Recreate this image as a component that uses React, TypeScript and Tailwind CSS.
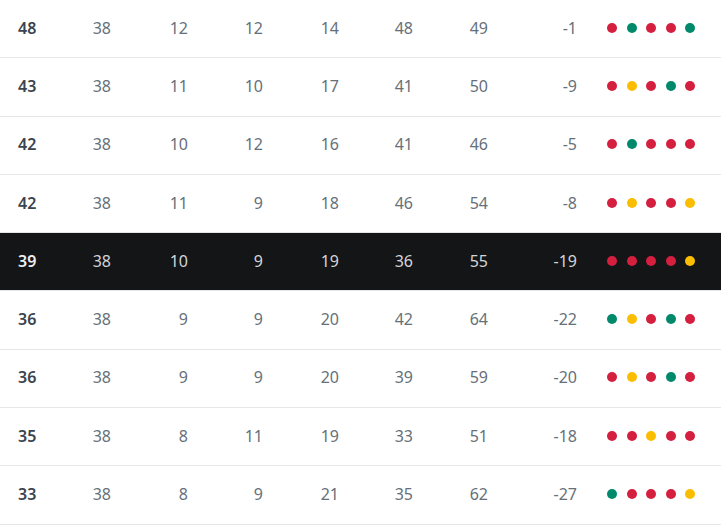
import React from "react";

type Form = "W" | "D" | "L";
type Row = { pts: number; vals: number[]; form: Form[]; dark?: boolean };

const rows: Row[] = [
  { pts: 48, vals: [38, 12, 12, 14, 48, 49, -1], form: ["L", "W", "L", "L", "W"] },
  { pts: 43, vals: [38, 11, 10, 17, 41, 50, -9], form: ["L", "D", "L", "W", "L"] },
  { pts: 42, vals: [38, 10, 12, 16, 41, 46, -5], form: ["L", "W", "L", "L", "L"] },
  { pts: 42, vals: [38, 11, 9, 18, 46, 54, -8], form: ["L", "D", "L", "L", "D"] },
  { pts: 39, vals: [38, 10, 9, 19, 36, 55, -19], form: ["L", "L", "L", "L", "D"], dark: true },
  { pts: 36, vals: [38, 9, 9, 20, 42, 64, -22], form: ["W", "D", "L", "W", "L"] },
  { pts: 36, vals: [38, 9, 9, 20, 39, 59, -20], form: ["L", "D", "L", "W", "L"] },
  { pts: 35, vals: [38, 8, 11, 19, 33, 51, -18], form: ["L", "L", "D", "L", "L"] },
  { pts: 33, vals: [38, 8, 9, 21, 35, 62, -27], form: ["W", "L", "L", "L", "D"] },
];

const dotClass: Record<Form, string> = {
  W: "bg-[#00896a]",
  D: "bg-[#fbbd00]",
  L: "bg-[#d41f3f]",
};

export default function App() {
  return (
    <div
      className="w-[721px] h-[526px] bg-white overflow-hidden"
      style={{ fontFamily: '"Noto Sans", "Open Sans", sans-serif' }}
    >
      {rows.map((r, i) => (
        <div
          key={i}
          className={`grid grid-cols-[60px_51px_77px_75px_76px_74px_75px_89px_1fr] items-center h-[58.3px] pb-[2px] border-b border-[#e3e7e9] text-[16px] ${
            r.dark ? "bg-[#141517] text-[#d3d6d9]" : "text-[#66707a]"
          }`}
        >
          <div className={`pl-[18px] font-semibold ${r.dark ? "text-[#eceef0]" : "text-[#3a444e]"}`}>
            {r.pts}
          </div>
          {r.vals.map((v, j) => (
            <div key={j} className="text-right">
              {v}
            </div>
          ))}
          <div className="flex items-center gap-[9.6px] pl-[30px]">
            {r.form.map((f, k) => (
              <span key={k} className={`block w-[10px] h-[10px] rounded-full ${dotClass[f]}`} />
            ))}
          </div>
        </div>
      ))}
    </div>
  );
}
